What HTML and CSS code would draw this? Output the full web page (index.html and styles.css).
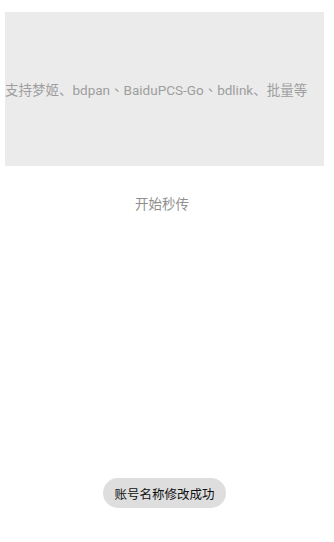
FILE: index.html
```html
<!DOCTYPE html>
<html lang="zh">
<head>
<meta charset="utf-8">
<link rel="stylesheet" href="styles.css">
</head>
<body>
<div class="page">
  <div class="input-box">
    <span class="placeholder">支持梦姬<span class="sep">、</span>bdpan<span class="sep">、</span>BaiduPCS-Go<span class="sep">、</span>bdlink<span class="sep">、</span>批量等</span>
  </div>
  <div class="action">开始秒传</div>
</div>
<div class="toast">账号名称修改成功</div>
</body>
</html>
```

FILE: styles.css
```css
html, body {
  margin: 0;
  padding: 0;
  background: #ffffff;
  font-family: Roboto, "Noto Sans CJK SC", sans-serif;
}
.page {
  padding: 12px 10px 0 5px;
  display: flex;
  flex-direction: column;
}
.input-box {
  height: 154px;
  background: #ebebeb;
  display: flex;
  align-items: center;
}
.placeholder {
  font-size: 13.5px;
  color: #9e9e9e;
  white-space: nowrap;
}
.sep {
  font-family: "Noto Sans CJK TC", sans-serif;
}
.action {
  margin-top: 27px;
  text-align: center;
  font-size: 13.5px;
  color: #8f8f8f;
  padding-right: 5px;
}
.toast {
  position: absolute;
  left: 103px;
  top: 478px;
  width: 123px;
  height: 30px;
  border-radius: 15px;
  background: #dedede;
  color: #111;
  font-size: 12.5px;
  display: flex;
  align-items: center;
  justify-content: center;
}
```
